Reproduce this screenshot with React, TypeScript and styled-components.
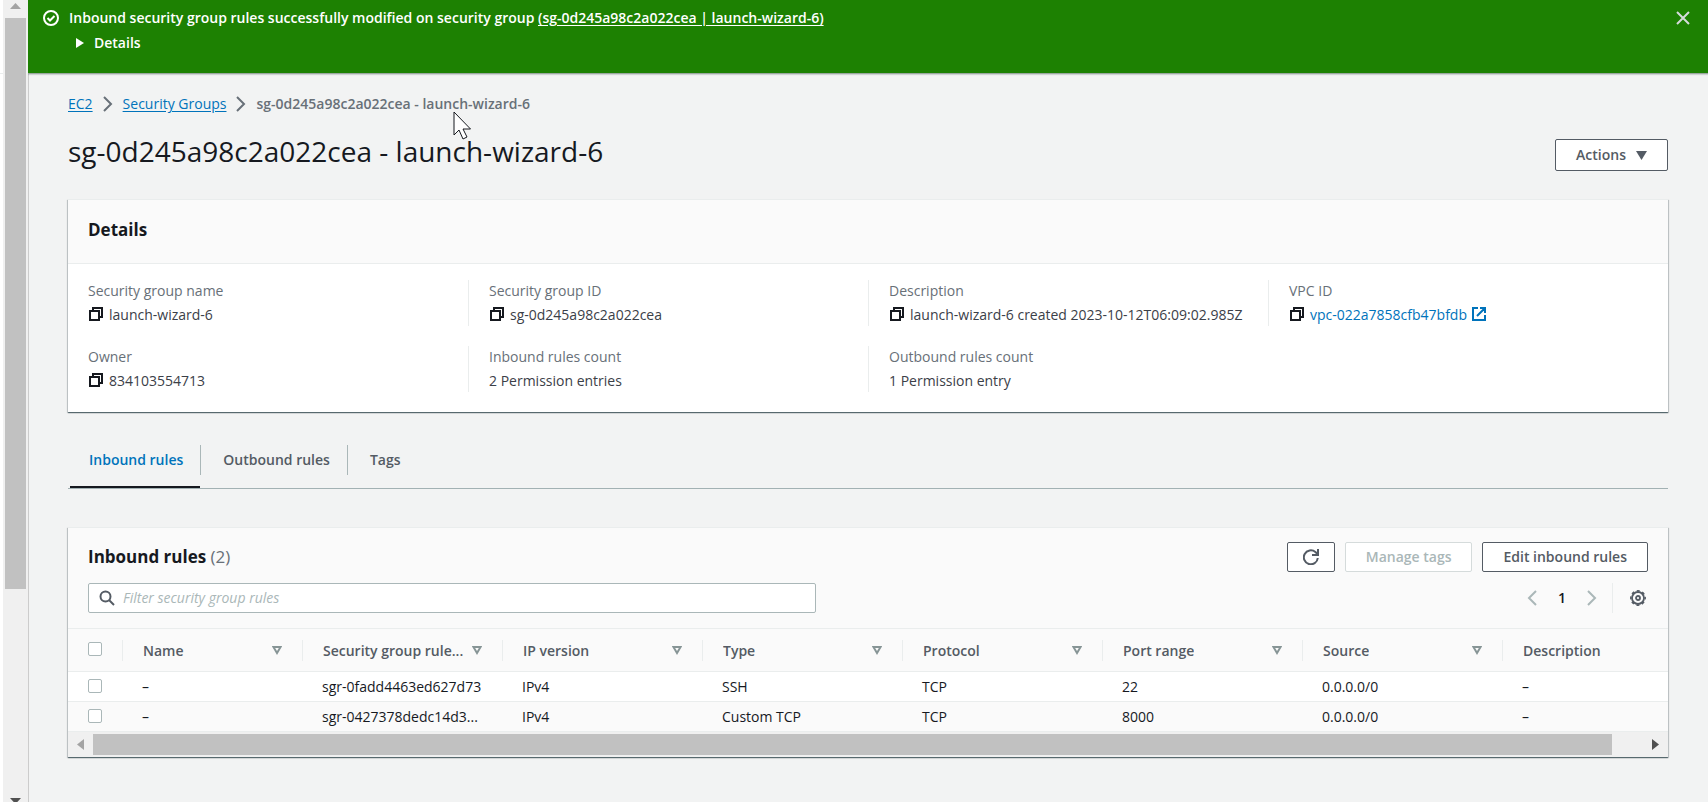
import React from 'react';
import styled, { createGlobalStyle, css } from 'styled-components';

const color = {
  text: '#16191f',
  heading: '#16191f',
  body: '#3b4048',
  muted: '#545b64',
  label: '#687078',
  link: '#0073bb',
  line: '#eaeded',
  control: '#aab7b8',
  page: '#f2f3f3',
  header: '#fafafa',
  success: '#1d8102',
};

const GlobalStyle = createGlobalStyle`
  *, *::before, *::after { box-sizing: border-box; }
  body {
    margin: 0;
    overflow: hidden;
    background: ${color.page};
    color: ${color.text};
    font: 14px/22px "Open Sans", "Noto Sans", sans-serif;
  }
  h1, h2, dl, dd, ol, ul { margin: 0; padding: 0; list-style: none; }
  button, input { font: inherit; }
  svg { display: block; flex: none; }
`;

/* ---------- page frame ---------- */

const Page = styled.div`
  display: flex;
  height: 100vh;
  overflow: hidden;
`;

const SideRail = styled.aside`
  flex: none;
  display: flex;
  width: 28px;
  background: #fff;
`;

const RailEdge = styled.div`
  width: 3px;
  height: 74px;
  border-bottom: 1px solid ${color.line};
`;

const VerticalTrack = styled.div`
  flex: 1;
  display: flex;
  flex-direction: column;
  align-items: center;
  margin-bottom: -2px;
  background: #f0f0f0;
  padding-top: 3px;
`;

const VerticalThumb = styled.div`
  width: 21px;
  height: calc(71% + 2px);
  margin: 9px 0 auto;
  background: #c1c1c1;
`;

const Main = styled.main`
  position: relative;
  flex: 1;
  min-width: 0;
  overflow: hidden;
  box-shadow: inset 1px 0 #ccc;
`;

const Pointer = styled.svg`
  position: absolute;
  top: 111px;
  left: 425px;
  pointer-events: none;
`;

/* ---------- flash message ---------- */

const Flash = styled.section`
  display: flex;
  align-items: flex-start;
  padding: 7px 17px 19px 15px;
  background: ${color.success};
  border-bottom: 1px solid #9ba7a0;
  box-shadow: 0 1px 1px rgba(0, 28, 36, 0.15);
  color: #fff;
  font-weight: 600;
`;

const FlashIcon = styled.span`
  padding: 3px 10px 3px 0;
`;

const FlashBody = styled.div`
  flex: 1;
  display: grid;
  gap: 3px;
`;

const FlashLink = styled.a`
  color: inherit;
  text-underline-offset: 2px;
`;

const FlashToggle = styled.button`
  display: flex;
  align-items: center;
  justify-self: start;
  gap: 10px;
  border: 0;
  padding: 0 7px;
  background: none;
  color: inherit;
  font-weight: 600;
`;

const CloseButton = styled.button`
  border: 0;
  padding: 3px 0;
  background: none;
  color: #d5dbdb;
`;

/* ---------- heading area ---------- */

const Content = styled.div`
  padding: 19px 40px 45px;
`;

const Breadcrumbs = styled.ol`
  display: flex;
  align-items: center;
  gap: 10px;
  color: ${color.label};
`;

const Crumb = styled.li<{ $current?: boolean }>`
  display: flex;
  align-items: center;
  gap: 10px;
  font-weight: ${(p) => (p.$current ? 600 : 400)};
  a { color: ${color.link}; text-underline-offset: 2px; }
`;

const TitleRow = styled.header`
  display: flex;
  align-items: flex-end;
  justify-content: space-between;
  padding: 18px 0 28px;
`;

const PageTitle = styled.h1`
  padding-bottom: 2px;
  font-size: 28px;
  line-height: 36px;
  font-weight: 400;
`;

const Button = styled.button<{ $tall?: boolean }>`
  display: flex;
  align-items: center;
  justify-content: center;
  gap: 10px;
  height: ${(p) => (p.$tall ? 32 : 30)}px;
  padding: 0 20px;
  border: 1px solid ${color.muted};
  border-radius: 2px;
  background: #fff;
  color: ${color.muted};
  font-weight: 600;
  white-space: nowrap;
  &:disabled { border-color: #d5dbdb; color: ${color.control}; }
`;

const RefreshButton = styled(Button)`
  padding: 0 15px;
`;

/* ---------- panels ---------- */

const Panel = styled.section`
  border-top: 1px solid ${color.line};
  background: #fff;
  box-shadow: 0 1px 1px rgba(0, 28, 36, 0.5), 1px 1px 1px rgba(0, 28, 36, 0.15),
    -1px 1px 1px rgba(0, 28, 36, 0.15);
`;

const PanelTitle = styled.h2`
  color: ${color.heading};
  font-size: 17px;
  line-height: 22px;
  font-weight: 700;
  span { color: ${color.label}; font-weight: 400; }
`;

const DetailsHeader = styled.header`
  padding: 19px 20px 22px;
  border-bottom: 1px solid ${color.line};
  background: ${color.header};
`;

const Fields = styled.dl`
  display: grid;
  grid-template-columns: repeat(4, 1fr);
  row-gap: 20px;
  padding: 16px 0 20px;
`;

const Field = styled.div<{ $first: boolean }>`
  display: grid;
  row-gap: 2px;
  padding-left: 20px;
  border-left: ${(p) => (p.$first ? '0' : `1px solid ${color.line}`)};
  dt { color: ${color.label}; }
`;

const FieldValue = styled.dd`
  display: flex;
  align-items: center;
  gap: 5px;
  color: ${color.body};
  white-space: nowrap;
  a { display: flex; align-items: center; gap: 4px; color: ${color.link}; text-decoration: none; }
`;

const IconButton = styled.button`
  border: 0;
  padding: 0;
  background: none;
  color: ${color.text};
`;

const SettingsButton = styled(IconButton)`
  color: ${color.muted};
`;

/* ---------- tabs ---------- */

const TabList = styled.div`
  display: flex;
  margin: 33px 0 38px;
  padding-left: 2px;
  border-bottom: 1px solid #a2b1b3;
`;

const Tab = styled.button<{ $active?: boolean }>`
  padding: 0 0 11px;
  border: 0;
  border-bottom: 2px solid ${(p) => (p.$active ? color.text : 'transparent')};
  background: none;
  color: ${(p) => (p.$active ? color.link : color.muted)};
  font-weight: 600;
  span { display: block; padding: 4px 17px 4px 19px; }
  &:not(:first-child) span { border-left: 1px solid ${color.control}; padding-left: 22px; }
`;

/* ---------- rules table ---------- */

const RulesHeader = styled.header`
  display: grid;
  gap: 11px;
  padding: 14px 20px 15px;
  border-bottom: 1px solid ${color.line};
  background: ${color.header};
`;

const HeaderRow = styled.div`
  display: flex;
  align-items: center;
  justify-content: space-between;
`;

const ButtonGroup = styled.div`
  display: flex;
  gap: 10px;
`;

const SearchBox = styled.label`
  flex: 0 1 728px;
  display: flex;
  align-items: center;
  gap: 8px;
  height: 30px;
  padding: 0 10px;
  border: 1px solid ${color.control};
  border-radius: 2px;
  background: #fff;
  color: ${color.muted};
`;

const SearchInput = styled.input`
  flex: 1;
  min-width: 0;
  border: 0;
  padding: 0;
  outline: 0;
  background: none;
  color: ${color.text};
  &::placeholder { color: ${color.control}; font-style: italic; opacity: 1; }
`;

const Pager = styled.nav`
  display: flex;
  align-items: center;
  gap: 17px;
  padding-right: 2px;
`;

const PagerButton = styled.button`
  border: 0;
  padding: 0 4px;
  background: none;
  color: ${color.control};
`;

const PagerNumber = styled.span`
  font-weight: 600;
`;

const PagerSettings = styled.div`
  display: flex;
  align-items: center;
  height: 30px;
  margin-left: -6px;
  padding-left: 17px;
  border-left: 1px solid ${color.line};
`;

const TableFrame = styled.div`
  overflow: hidden;
`;

const Table = styled.table`
  width: 100%;
  table-layout: fixed;
  border-collapse: separate;
  border-spacing: 0;
`;

const cell = css`
  padding: 0;
  border-bottom: 1px solid ${color.line};
  text-align: left;
  white-space: nowrap;
`;

const HeadCell = styled.th<{ $width?: number }>`
  ${cell}
  width: ${(p) => (p.$width ? `${p.$width}px` : 'auto')};
  height: 43px;
  background: ${color.header};
  color: ${color.muted};
  font-weight: 600;
`;

const HeadLabel = styled.div`
  display: flex;
  align-items: center;
  justify-content: space-between;
  padding: 0 20px;
  border-left: 1px solid ${color.line};
  line-height: 21px;
  span { overflow: hidden; text-overflow: ellipsis; }
`;

const Row = styled.tr`
  &:nth-child(even) { background: ${color.header}; }
`;

const Cell = styled.td`
  ${cell}
  height: 30px;
  padding: 0 18px 0 20px;
  overflow: hidden;
  text-overflow: ellipsis;
`;

const Checkbox = styled.input`
  appearance: none;
  display: block;
  width: 14px;
  height: 14px;
  margin: 0 0 2px 20px;
  border: 1px solid ${color.control};
  border-radius: 2px;
  background: #fff;
`;

const CheckCell = styled.td`
  ${cell}
`;

const HorizontalTrack = styled.div`
  display: flex;
  align-items: center;
  height: 25px;
  padding: 0 9px;
  background: #f0f0f0;
`;

const HorizontalRange = styled.div`
  flex: 1;
  margin: 0 9px;
`;

const HorizontalThumb = styled.div`
  width: 98%;
  height: 21px;
  background: #c1c1c1;
`;

/* ---------- icons ---------- */

const Stroke = ({ d }: { d: string }) => (
  <svg width="16" height="16" viewBox="0 0 16 16" fill="none" stroke="currentColor" strokeWidth="2" aria-hidden="true">
    <path d={d} />
  </svg>
);

const CopyIcon = () => <Stroke d="M2 4h9v9H2zM5 4V1h9v9h-3" />;
const ExternalIcon = () => <Stroke d="M7 1H2v12h12V8M9 1h5v5M14 1L6 9" />;
const CloseIcon = () => <Stroke d="M2 2l12 12M14 2L2 14" />;
const RefreshIcon = () => <Stroke d="M14.8 9A7 7 0 1 1 12.4 3L14.5 5M15 0V6H9" />;
const SearchIcon = () => (
  <svg width="16" height="16" viewBox="0 0 16 16" fill="none" stroke="currentColor" strokeWidth="2" aria-hidden="true">
    <circle cx="6.5" cy="6.5" r="5" />
    <path d="M10 10l5 5" />
  </svg>
);
const CheckCircle = () => (
  <svg width="16" height="16" viewBox="0 0 16 16" fill="none" stroke="currentColor" strokeWidth="2" aria-hidden="true">
    <circle cx="8" cy="8" r="7" />
    <path d="M4.5 8l2.5 2.5L11.5 6" />
  </svg>
);
const GearIcon = () => (
  <svg width="16" height="16" viewBox="0 0 16 16" fill="none" stroke="currentColor" aria-hidden="true">
    <circle cx="8" cy="8" r="6" strokeWidth="1.8" />
    <circle cx="8" cy="8" r="7.2" strokeWidth="1.5" strokeDasharray="3 2.655" strokeDashoffset="1.5" />
    <circle cx="8" cy="8" r="2" strokeWidth="1.8" />
  </svg>
);
const Chevron = ({ left }: { left?: boolean }) => (
  <svg width="10" height="16" viewBox="0 0 10 16" fill="none" stroke="currentColor" strokeWidth="2" aria-hidden="true">
    <path d={left ? 'M9 1L2 8l7 7' : 'M1 1l7 7-7 7'} />
  </svg>
);

const arrows = {
  right: { w: 7, h: 11, d: 'M0 0l7 5.5L0 11z' },
  left: { w: 7, h: 11, d: 'M7 0L0 5.5 7 11z' },
  up: { w: 11, h: 6, d: 'M0 6l5.5-6L11 6z' },
  down: { w: 11, h: 6, d: 'M0 0l5.5 6L11 0z' },
  menu: { w: 11, h: 9, d: 'M0 0h11L5.5 9z' },
  play: { w: 8, h: 10, d: 'M0 0l8 5-8 5z' },
};
const Arrow = ({ kind, fill = 'currentColor' }: { kind: keyof typeof arrows; fill?: string }) => {
  const a = arrows[kind];
  return (
    <svg width={a.w} height={a.h} viewBox={`0 0 ${a.w} ${a.h}`} fill={fill} aria-hidden="true">
      <path d={a.d} />
    </svg>
  );
};
const SortIcon = () => (
  <svg width="10" height="9" viewBox="0 0 10 9" fill="none" stroke="#879596" strokeWidth="2" aria-hidden="true">
    <path d="M1.4 1h7.2L5 7z" />
  </svg>
);

/* ---------- data ---------- */

type FieldData = { label: string; value: string; copy?: boolean; link?: boolean };

const fields: FieldData[] = [
  { label: 'Security group name', value: 'launch-wizard-6', copy: true },
  { label: 'Security group ID', value: 'sg-0d245a98c2a022cea', copy: true },
  { label: 'Description', value: 'launch-wizard-6 created 2023-10-12T06:09:02.985Z', copy: true },
  { label: 'VPC ID', value: 'vpc-022a7858cfb47bfdb', copy: true, link: true },
  { label: 'Owner', value: '834103554713', copy: true },
  { label: 'Inbound rules count', value: '2 Permission entries' },
  { label: 'Outbound rules count', value: '1 Permission entry' },
];

const columns = [
  { title: 'Name', width: 180 },
  { title: 'Security group rule...', width: 200 },
  { title: 'IP version', width: 200 },
  { title: 'Type', width: 200 },
  { title: 'Protocol', width: 200 },
  { title: 'Port range', width: 200 },
  { title: 'Source', width: 200 },
  { title: 'Description' },
];

const rules = [
  ['–', 'sgr-0fadd4463ed627d73', 'IPv4', 'SSH', 'TCP', '22', '0.0.0.0/0', '–'],
  ['–', 'sgr-0427378dedc14d3...', 'IPv4', 'Custom TCP', 'TCP', '8000', '0.0.0.0/0', '–'],
];

export default function App() {
  return (
    <Page>
      <GlobalStyle />
      <SideRail>
        <RailEdge />
        <VerticalTrack>
          <Arrow kind="up" fill="#a3a3a3" />
          <VerticalThumb />
          <Arrow kind="down" fill="#505050" />
        </VerticalTrack>
      </SideRail>

      <Main>
        <Flash role="status">
          <FlashIcon><CheckCircle /></FlashIcon>
          <FlashBody>
            <div>
              Inbound security group rules successfully modified on security group{' '}
              <FlashLink href="#group">(sg-0d245a98c2a022cea | launch-wizard-6)</FlashLink>
            </div>
            <FlashToggle type="button"><Arrow kind="play" />Details</FlashToggle>
          </FlashBody>
          <CloseButton type="button" aria-label="Dismiss"><CloseIcon /></CloseButton>
        </Flash>

        <Content>
          <nav aria-label="Breadcrumbs">
            <Breadcrumbs>
              <Crumb><a href="#ec2">EC2</a><Chevron /></Crumb>
              <Crumb><a href="#groups">Security Groups</a><Chevron /></Crumb>
              <Crumb $current>sg-0d245a98c2a022cea - launch-wizard-6</Crumb>
            </Breadcrumbs>
          </nav>

          <TitleRow>
            <PageTitle>sg-0d245a98c2a022cea - launch-wizard-6</PageTitle>
            <Button type="button" $tall>Actions<Arrow kind="menu" /></Button>
          </TitleRow>

          <Panel>
            <DetailsHeader><PanelTitle>Details</PanelTitle></DetailsHeader>
            <Fields>
              {fields.map((f, i) => (
                <Field key={f.label} $first={i % 4 === 0}>
                  <dt>{f.label}</dt>
                  <FieldValue>
                    {f.copy && <IconButton type="button" aria-label={`Copy ${f.label}`}><CopyIcon /></IconButton>}
                    {f.link ? <a href="#vpc">{f.value}<ExternalIcon /></a> : f.value}
                  </FieldValue>
                </Field>
              ))}
            </Fields>
          </Panel>

          <TabList role="tablist">
            <Tab type="button" role="tab" aria-selected $active><span>Inbound rules</span></Tab>
            <Tab type="button" role="tab" aria-selected={false}><span>Outbound rules</span></Tab>
            <Tab type="button" role="tab" aria-selected={false}><span>Tags</span></Tab>
          </TabList>

          <Panel>
            <RulesHeader>
              <HeaderRow>
                <PanelTitle>Inbound rules <span>(2)</span></PanelTitle>
                <ButtonGroup>
                  <RefreshButton type="button" aria-label="Refresh"><RefreshIcon /></RefreshButton>
                  <Button type="button" disabled>Manage tags</Button>
                  <Button type="button">Edit inbound rules</Button>
                </ButtonGroup>
              </HeaderRow>
              <HeaderRow>
                <SearchBox>
                  <SearchIcon />
                  <SearchInput type="text" aria-label="Filter security group rules" placeholder="Filter security group rules" />
                </SearchBox>
                <Pager aria-label="Pagination">
                  <PagerButton type="button" aria-label="Previous page"><Chevron left /></PagerButton>
                  <PagerNumber>1</PagerNumber>
                  <PagerButton type="button" aria-label="Next page"><Chevron /></PagerButton>
                  <PagerSettings>
                    <SettingsButton type="button" aria-label="Preferences"><GearIcon /></SettingsButton>
                  </PagerSettings>
                </Pager>
              </HeaderRow>
            </RulesHeader>

            <TableFrame>
              <Table>
                <thead>
                  <tr>
                    <HeadCell $width={54}><Checkbox type="checkbox" aria-label="Select all rules" /></HeadCell>
                    {columns.map((c) => (
                      <HeadCell key={c.title} $width={c.width}>
                        <HeadLabel><span>{c.title}</span>{c.width && <SortIcon />}</HeadLabel>
                      </HeadCell>
                    ))}
                  </tr>
                </thead>
                <tbody>
                  {rules.map((r) => (
                    <Row key={r[1]}>
                      <CheckCell><Checkbox type="checkbox" aria-label={`Select ${r[1]}`} /></CheckCell>
                      {r.map((v, i) => <Cell key={i}>{v}</Cell>)}
                    </Row>
                  ))}
                </tbody>
              </Table>
            </TableFrame>
            <HorizontalTrack>
              <Arrow kind="left" fill="#a3a3a3" />
              <HorizontalRange><HorizontalThumb /></HorizontalRange>
              <Arrow kind="right" fill="#505050" />
            </HorizontalTrack>
          </Panel>
        </Content>

        <Pointer width="19" height="29" viewBox="-1 -1 19 29" fill="#fff" stroke="#16191f" strokeWidth="1" aria-hidden="true">
          <path d="M0 0v23l5-5 4 9 4-2-4-8h7.500z" />
        </Pointer>
      </Main>
    </Page>
  );
}
